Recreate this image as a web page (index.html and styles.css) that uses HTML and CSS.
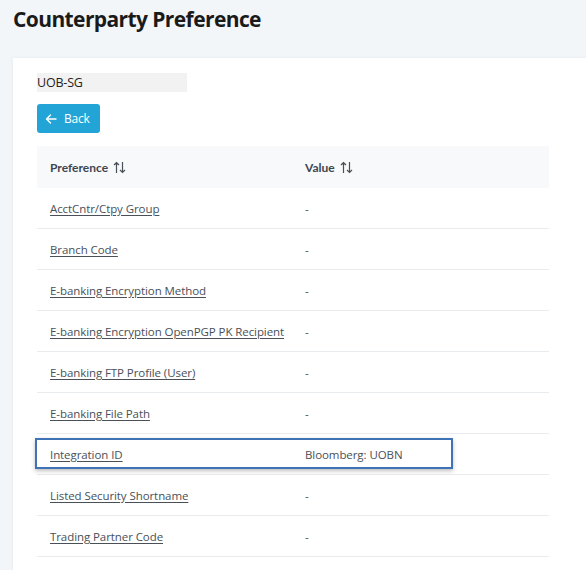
FILE: index.html
```html
<!DOCTYPE html>
<html>
<head>
<meta charset="utf-8">
<link rel="stylesheet" href="styles.css">
</head>
<body>
<h1 class="title">Counterparty Preference</h1>
<div class="card">
  <div class="name">UOB-SG</div>
  <button class="back"><svg width="12" height="12" viewBox="0 0 12 12"><path d="M11 6H1.5M5.5 2 1.5 6l4 4" fill="none" stroke="#fff" stroke-width="1.4" stroke-linecap="round" stroke-linejoin="round"/></svg><span>Back</span></button>
  <div class="table">
    <div class="row head">
      <div class="cell">Preference <svg class="sort" width="13" height="13" viewBox="0 0 13 13"><path d="M3.5 12V1.5M1 4 3.5 1.5 6 4M9.5 1v10.5M7 9l2.5 2.5L12 9" fill="none" stroke="#495057" stroke-width="1.2"/></svg></div>
      <div class="cell">Value <svg class="sort" width="13" height="13" viewBox="0 0 13 13"><path d="M3.5 12V1.5M1 4 3.5 1.5 6 4M9.5 1v10.5M7 9l2.5 2.5L12 9" fill="none" stroke="#495057" stroke-width="1.2"/></svg></div>
    </div>
    <div class="row"><div class="cell"><a>AcctCntr/Ctpy Group</a></div><div class="cell">-</div></div>
    <div class="row"><div class="cell"><a>Branch Code</a></div><div class="cell">-</div></div>
    <div class="row"><div class="cell"><a>E-banking Encryption Method</a></div><div class="cell">-</div></div>
    <div class="row"><div class="cell"><a>E-banking Encryption OpenPGP PK Recipient</a></div><div class="cell">-</div></div>
    <div class="row"><div class="cell"><a>E-banking FTP Profile (User)</a></div><div class="cell">-</div></div>
    <div class="row"><div class="cell"><a>E-banking File Path</a></div><div class="cell">-</div></div>
    <div class="row selected"><div class="cell"><a>Integration ID</a></div><div class="cell">Bloomberg: UOBN</div><div class="focus"></div></div>
    <div class="row"><div class="cell"><a>Listed Security Shortname</a></div><div class="cell">-</div></div>
    <div class="row"><div class="cell"><a>Trading Partner Code</a></div><div class="cell">-</div></div>
  </div>
</div>
</body>
</html>
```
FILE: styles.css
```css
html, body {
  margin: 0;
  padding: 0;
}
body {
  background: #f3f6f9;
  font-family: "Open Sans", "Noto Sans", sans-serif;
  color: #495057;
  overflow: hidden;
  height: 570px;
}
.title {
  margin: 0;
  padding: 5px 0 0 13px;
  height: 58px;
  box-sizing: border-box;
  font-size: 21px;
  letter-spacing: -0.6px;
  font-weight: 700;
  color: #1a1a1a;
  line-height: 28px;
}
.card {
  margin-left: 13px;
  background: #fff;
  padding: 15px 24px 0 24px;
  box-shadow: 0 0 4px rgba(0,0,0,0.06);
  height: 512px;
  box-sizing: border-box;
}
.name {
  width: 150px;
  height: 19px;
  background: #f2f2f2;
  font-size: 12.5px;
  letter-spacing: -0.2px;
  line-height: 19px;
  color: #222;
}
.back {
  margin-top: 12px;
  display: flex;
  align-items: center;
  gap: 7px;
  height: 29px;
  width: 63px;
  padding: 0 0 0 8px;
  border: none;
  border-radius: 3px;
  background: #22a4d6;
  color: #fff;
  font-family: "Open Sans", "Noto Sans", sans-serif;
  font-size: 12px;
  letter-spacing: -0.2px;
}
.table {
  margin-top: 13px;
  width: 512px;
}
.row {
  position: relative;
  display: grid;
  grid-template-columns: 255px 1fr;
  height: 41px;
  box-sizing: border-box;
  border-bottom: 1px solid #e9ecef;
  align-items: center;
  font-size: 11.5px;
  letter-spacing: -0.08px;
  white-space: nowrap;
}
.row.head {
  height: 42px;
  background: #f8f9fa;
  border-bottom: none;
  font-family: Lato, "Open Sans", sans-serif;
  font-weight: 700;
  font-size: 12px;
  letter-spacing: 0;
  color: #3e4651;
}
.cell {
  padding-left: 13px;
  display: flex;
  align-items: center;
}
.sort {
  margin-left: 5px;
}
.cell a {
  color: #495057;
  text-decoration: underline;
  text-underline-offset: 2px;
}
.focus {
  position: absolute;
  left: -2px;
  top: 4px;
  width: 414px;
  height: 27px;
  border: 2px solid #3e74b5;
  box-shadow: 0 2px 4px rgba(0,0,0,0.25);
  pointer-events: none;
}
```
